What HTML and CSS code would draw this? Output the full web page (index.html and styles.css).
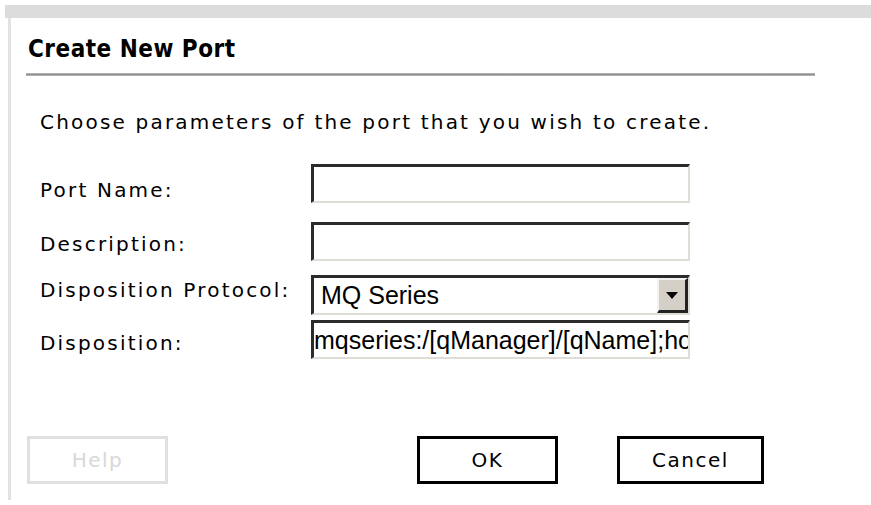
FILE: index.html
```html
<!DOCTYPE html>
<html>
<head>
<meta charset="utf-8">
<title>Create New Port</title>
<link rel="stylesheet" href="styles.css">
</head>
<body>
<div class="topbar"></div>
<div class="panel">
  <h1 class="title">Create New Port</h1>
  <div class="rule"></div>
  <p class="intro">Choose parameters of the port that you wish to create.</p>
  <div class="form">
    <label class="lbl row-name">Port Name:</label>
    <div class="field row-name"><span class="box"></span></div>
    <label class="lbl row-desc">Description:</label>
    <div class="field row-desc"><span class="box"></span></div>
    <label class="lbl row-proto">Disposition Protocol:</label>
    <div class="field row-proto">
      <span class="box select">
        <span class="val">MQ Series</span>
        <span class="drop"><svg width="12" height="7" viewBox="0 0 12 7"><path d="M0 0H12L6 7Z" fill="#000"/></svg></span>
      </span>
    </div>
    <label class="lbl row-disp">Disposition:</label>
    <div class="field row-disp"><span class="box"><span class="val clip">mqseries:/[qManager]/[qName];host=[host];port=[port]</span></span></div>
  </div>
  <div class="buttons">
    <span class="btn disabled">Help</span>
    <span class="btn ok">OK</span>
    <span class="btn cancel">Cancel</span>
  </div>
</div>
</body>
</html>
```

FILE: styles.css
```css
html, body {
  margin: 0;
  padding: 0;
  background: #fff;
}

body {
  width: 871px;
  height: 505px;
  overflow: hidden;
  font-family: "DejaVu Sans", Verdana, sans-serif;
  color: #000;
}

.topbar {
  height: 13px;
  margin: 5px 0 0 5px;
  background: #dcdcdc;
}

.panel {
  margin-left: 8px;
  height: 482px;
  border-left: 3px solid #e2e2e2;
  padding-left: 15px;
}

.title {
  margin: 0;
  padding: 21px 0 0 2px;
  height: 34px;
  font-family: "DejaVu Sans Condensed", "DejaVu Sans", sans-serif;
  font-weight: bold;
  font-size: 24px;
  line-height: 20px;
  letter-spacing: 0.5px;
}

.rule {
  width: 789px;
  height: 3px;
  background: linear-gradient(#c4c4c4, #8f8f8f 50%, #c4c4c4);
}

.intro {
  margin: 0;
  padding: 34px 0 0 14px;
  font-size: 20px;
  line-height: 24px;
  letter-spacing: 2.2px;
}

.form {
  display: grid;
  grid-template-columns: 271px 379px;
  padding-left: 14px;
  margin-top: 30px;
}

.lbl {
  align-self: start;
  font-size: 20px;
  line-height: 24px;
  letter-spacing: 2.2px;
}

.lbl.row-name { padding-top: 14px; }
.lbl.row-desc { padding-top: 10px; }
.lbl.row-proto { padding-top: 3px; }
.lbl.row-disp { padding-top: 11px; }

.row-desc { margin-top: 19px; }
.row-proto { margin-top: 14px; }
.row-disp { margin-top: 5px; }

.box {
  display: flex;
  align-items: center;
  box-sizing: border-box;
  width: 379px;
  height: 39px;
  border-style: solid;
  border-width: 3px 2px 2px 3px;
  border-color: #2b2b2b #e0ddd6 #e0ddd6 #2b2b2b;
  background: #fff;
  overflow: hidden;
  font-family: "Liberation Sans", Arial, sans-serif;
  font-size: 25px;
}

.select {
  height: 40px;
}

.val {
  flex: 1;
  padding-left: 7px;
  white-space: nowrap;
}

.clip {
  overflow: hidden;
  padding-left: 0;
}

.drop {
  flex: none;
  display: flex;
  align-items: center;
  justify-content: center;
  box-sizing: border-box;
  width: 31px;
  height: 35px;
  background: #d4d0c8;
  border-style: solid;
  border-width: 2px 3px 3px 2px;
  border-color: #f4f2ee #222 #222 #f4f2ee;
}

.buttons {
  display: flex;
  margin-top: 77px;
  margin-left: 1px;
}

.btn {
  box-sizing: border-box;
  display: flex;
  align-items: center;
  justify-content: center;
  height: 48px;
  width: 141px;
  border: 3px solid #000;
  font-family: "DejaVu Sans", sans-serif;
  font-size: 20px;
  letter-spacing: 1.5px;
}

.btn.disabled {
  border-color: #e0e0e0;
  color: #d8d8d8;
}

.btn.ok {
  margin-left: 249px;
}

.btn.cancel {
  width: 147px;
  margin-left: 59px;
}
```
